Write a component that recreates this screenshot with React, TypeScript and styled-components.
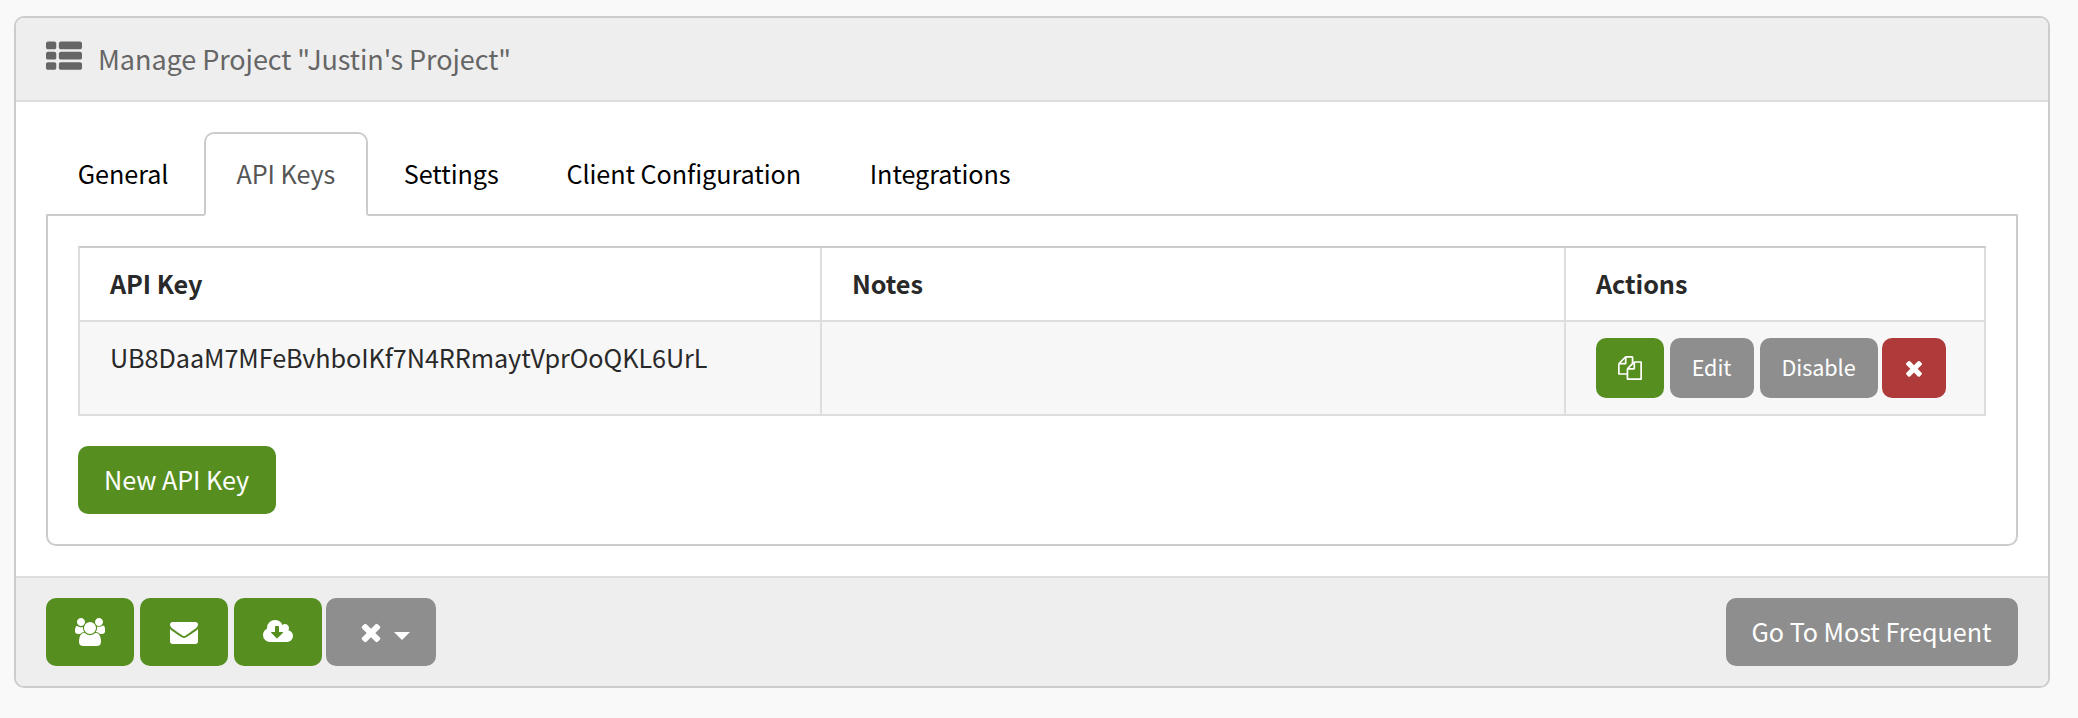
import React from "react";
import styled, { createGlobalStyle } from "styled-components";

const GlobalStyle = createGlobalStyle`
  *, *::before, *::after { box-sizing: border-box; }
  body {
    margin: 0;
    background: #f9f9f9;
    color: #292929;
    font-family: "Noto Sans CJK JP", "Open Sans", sans-serif;
    font-size: 25.2px;
    line-height: 40px;
    letter-spacing: -0.06px;
    -webkit-font-smoothing: antialiased;
  }
`;

const green = "#568f20";
const gray = "#8e8e8e";
const red = "#af3a3a";

const Page = styled.main`
  padding: 16px 28px 30px 14px;
`;

const Card = styled.section`
  display: flex;
  flex-direction: column;
  height: 672px;
  border: 2px solid #ccc;
  border-radius: 10px;
  background: #fff;
  overflow: hidden;
`;

const CardHeader = styled.header`
  display: flex;
  flex: none;
  align-items: flex-start;
  gap: 16px;
  height: 84px;
  padding: 21px 30px 0;
  border-bottom: 2px solid #ddd;
  background: #eee;
  color: #666;
`;

const Title = styled.h1`
  margin: 0;
  padding-top: 2px;
  font-size: 27px;
  font-weight: 400;
  line-height: 36px;
  letter-spacing: -0.07px;
`;

const CardBody = styled.div`
  flex: 1;
  padding: 30px 30px 0;
`;

const CardFooter = styled.footer`
  display: flex;
  flex: none;
  justify-content: space-between;
  align-items: flex-start;
  height: 110px;
  padding: 20px 30px 0;
  border-top: 2px solid #ddd;
  background: #eee;
`;

const Tabs = styled.nav`
  position: relative;
  z-index: 1;
  display: flex;
  gap: 4px;
  margin-bottom: -2px;
`;

const Tab = styled.a<{ $active?: boolean; $width: number; $indent?: number }>`
  width: ${(p) => p.$width}px;
  height: 84px;
  padding: 20px 0 0 ${(p) => p.$indent ?? 29.8}px;
  border: 2px solid ${(p) => (p.$active ? "#ccc" : "transparent")};
  border-bottom: ${(p) => (p.$active ? "2px solid #fff" : "0")};
  border-radius: 10px 10px 0 0;
  color: ${(p) => (p.$active ? "#555" : "#000")};
  background: ${(p) => (p.$active ? "#fff" : "transparent")};
  line-height: 39px;
  white-space: nowrap;
`;

const Pane = styled.div`
  height: 332px;
  padding: 30px;
  border: 2px solid #ccc;
  border-radius: 0 0 10px 10px;
`;

const Table = styled.table`
  width: 1908px;
  margin-bottom: 30px;
  table-layout: fixed;
  border-collapse: separate;
  border-spacing: 0;
  border-top: 2px solid #ccc;
  border-left: 2px solid #ddd;
`;

const Cell = styled.td`
  height: 94px;
  padding: 15px 30px 0;
  border-right: 2px solid #ddd;
  border-bottom: 2px solid #ddd;
  background: #f7f7f7;
  text-align: left;
  vertical-align: top;
  white-space: nowrap;
`;

const ActionCell = styled(Cell)`
  padding-top: 16px;
`;

const HeadCell = styled(Cell).attrs({ as: "th" })`
  height: 74px;
  background: #fff;
  font-weight: 700;
`;

const Group = styled.div<{ $gap?: number }>`
  display: flex;
  gap: ${(p) => p.$gap ?? 6}px;
`;

const Button = styled.button<{ $color: string; $width: number; $small?: boolean }>`
  display: flex;
  justify-content: center;
  align-items: center;
  width: ${(p) => p.$width}px;
  height: ${(p) => (p.$small ? 60 : 68)}px;
  padding: 0;
  border: 0;
  border-radius: 10px;
  background: ${(p) => p.$color};
  color: #fff;
  font: inherit;
  font-size: ${(p) => (p.$small ? 21.6 : 25.2)}px;
  letter-spacing: -0.06px;
  white-space: nowrap;
`;

const Label = styled.span`
  line-height: 40px;
  padding: 0 1px 2px 0;
`;

const Glyph = styled.svg<{ $w: number; $h: number }>`
  display: block;
  flex: none;
  width: ${(p) => p.$w}px;
  height: ${(p) => p.$h}px;
  fill: currentColor;
`;

const Caret = styled.i`
  margin: 8px 0 0 9px;
  border: 8px solid transparent;
  border-top-color: #fff;
  border-bottom: 0;
`;

const MenuContent = styled.span`
  display: flex;
  align-items: center;
  padding-left: 5px;
`;

const paths = {
  thList:
    "M512 1248v192q0 40-28 68t-68 28h-320q-40 0-68-28t-28-68v-192q0-40 28-68t68-28h320q40 0 68 28t28 68zm0-512v192q0 40-28 68t-68 28h-320q-40 0-68-28t-28-68v-192q0-40 28-68t68-28h320q40 0 68 28t28 68zm1280 512v192q0 40-28 68t-68 28h-960q-40 0-68-28t-28-68v-192q0-40 28-68t68-28h960q40 0 68 28t28 68zm-1280-1024v192q0 40-28 68t-68 28h-320q-40 0-68-28t-28-68v-192q0-40 28-68t68-28h320q40 0 68 28t28 68zm1280 512v192q0 40-28 68t-68 28h-960q-40 0-68-28t-28-68v-192q0-40 28-68t68-28h960q40 0 68 28t28 68zm0-512v192q0 40-28 68t-68 28h-960q-40 0-68-28t-28-68v-192q0-40 28-68t68-28h960q40 0 68 28t28 68z",
  times:
    "M1490 1322q0 40-28 68l-136 136q-28 28-68 28t-68-28l-294-294-294 294q-28 28-68 28t-68-28l-136-136q-28-28-28-68t28-68l294-294-294-294q-28-28-28-68t28-68l136-136q28-28 68-28t68 28l294 294 294-294q28-28 68-28t68 28l136 136q28 28 28 68t-28 68l-294 294 294 294q28 28 28 68z",
  envelope:
    "M1792 710v794q0 66-47 113t-113 47h-1472q-66 0-113-47t-47-113v-794q44 49 101 87 362 246 497 345 57 42 92.5 65.5t94.5 48 110 24.5h2q51 0 110-24.5t94.5-48 92.5-65.5q170-123 498-345 57-39 100-87zm0-294q0 79-49 151t-122 123q-376 261-468 325-10 7-42.5 31t-54 38.5-52 32.5-57.5 27-50 9h-2q-23 0-50-9t-57.5-27-52-32.5-54-38.5-42.5-31q-91-64-262-182.5t-205-142.5q-62-42-117-115.5t-55-136.5q0-78 41.5-130t118.5-52h1472q65 0 112.5 47t47.5 113z",
  copy:
    "M1696 384q40 0 68 28t28 68v1216q0 40-28 68t-68 28h-960q-40 0-68-28t-28-68v-288h-544q-40 0-68-28t-28-68v-672q0-40 20-88t48-76l408-408q28-28 76-48t88-20h416q40 0 68 28t28 68v328q68-40 128-40h416zm-544 213l-299 299h299v-299zm-640-384l-299 299h299v-299zm196 647l316-316v-416h-384v416q0 40-28 68t-68 28h-416v640h512v-256q0-40 20-88t48-76zm956 804v-1152h-384v416q0 40-28 68t-68 28h-416v640h896z",
  cloud:
    "M1280 928q0-14-9-23t-23-9h-224v-352q0-13-9.5-22.5t-22.5-9.5h-192q-13 0-22.5 9.5t-9.5 22.5v352h-224q-13 0-22.5 9.5t-9.5 22.5q0 14 9 23l352 352q9 9 23 9t23-9l351-351q10-12 10-24zm640 224q0 159-112.5 271.5t-271.5 112.5h-1088q-185 0-316.5-131.5t-131.5-316.5q0-130 70-240t188-165q-2-30-2-43 0-212 150-362t362-150q156 0 285.5 87t188.5 231q71-62 166-62 106 0 181 75t75 181q0 76-41 138 130 31 213.5 135.5t83.5 238.5z",
  users:
    "M593 896q-162 5-265 128h-134q-82 0-138-40.5t-56-118.5q0-353 124-353 6 0 43.5 21t97.5 42.5 119 21.5q67 0 133-23-5 37-5 66 0 159 90 294zm1071 637q0 120-73 189.5t-194 69.5h-874q-121 0-194-69.5t-73-189.5q0-53 3.5-103.5t14-109 26.5-108.5 43-97.5 62-81 85.5-53.5 111.5-20q10 0 43 21.5t73 48 107 48 135 21.5 135-21.5 107-48 73-48 43-21.5q61 0 111.5 20t85.5 53.5 62 81 43 97.5 26.5 108.5 14 109 3.5 103.5zm-1024-1277q0 106-75 181t-181 75-181-75-75-181 75-181 181-75 181 75 75 181zm704 384q0 159-112.5 271.5t-271.5 112.5-271.5-112.5-112.5-271.5 112.5-271.5 271.5-112.5 271.5 112.5 112.5 271.5zm576 225q0 78-56 118.5t-138 40.5h-134q-103-123-265-128 90-135 90-294 0-29-5-66 66 23 133 23 59 0 119-21.5t97.5-42.5 43.5-21q124 0 124 353zm-128-609q0 106-75 181t-181 75-181-75-75-181 75-181 181-75 181 75 75 181z",
};

function Icon({ name, size, units = 1792 }: { name: keyof typeof paths; size: number; units?: number }) {
  return (
    <Glyph $w={(size * units) / 1792} $h={size} viewBox={`0 0 ${units} 1792`} aria-hidden>
      <path d={paths[name]} />
    </Glyph>
  );
}

const tabs = [
  { name: "General", width: 154 },
  { name: "API Keys", width: 164, indent: 30.4, active: true },
  { name: "Settings", width: 158 },
  { name: "Client Configuration", width: 300, indent: 30.4 },
  { name: "Integrations", width: 204 },
];

export default function App() {
  return (
    <Page>
      <GlobalStyle />
      <Card>
        <CardHeader>
          <Icon name="thList" size={36} />
          <Title>Manage Project "Justin's Project"</Title>
        </CardHeader>
        <CardBody>
          <Tabs>
            {tabs.map((t) => (
              <Tab key={t.name} $width={t.width} $indent={t.indent} $active={t.active}>
                {t.name}
              </Tab>
            ))}
          </Tabs>
          <Pane>
            <Table>
              <colgroup>
                <col width={742} />
                <col width={744} />
                <col width={420} />
              </colgroup>
              <thead>
                <tr>
                  <HeadCell>API Key</HeadCell>
                  <HeadCell>Notes</HeadCell>
                  <HeadCell>Actions</HeadCell>
                </tr>
              </thead>
              <tbody>
                <tr>
                  <Cell>UB8DaaM7MFeBvhboIKf7N4RRmaytVprOoQKL6UrL</Cell>
                  <Cell />
                  <ActionCell>
                    <Group>
                      <Button $small $color={green} $width={68} aria-label="Copy">
                        <Icon name="copy" size={24} />
                      </Button>
                      <Button $small $color={gray} $width={84}>
                        <Label>Edit</Label>
                      </Button>
                      <Group $gap={4}>
                        <Button $small $color={gray} $width={118}>
                          <Label>Disable</Label>
                        </Button>
                        <Button $small $color={red} $width={64} aria-label="Delete">
                          <Icon name="times" size={24} />
                        </Button>
                      </Group>
                    </Group>
                  </ActionCell>
                </tr>
              </tbody>
            </Table>
            <Button $color={green} $width={198}>
              <Label>New API Key</Label>
            </Button>
          </Pane>
        </CardBody>
        <CardFooter>
          <Group>
            <Button $color={green} $width={88} aria-label="Users">
              <Icon name="users" size={28} units={1920} />
            </Button>
            <Button $color={green} $width={88} aria-label="Mail">
              <Icon name="envelope" size={28} />
            </Button>
            <Group $gap={4}>
              <Button $color={green} $width={88} aria-label="Download">
                <Icon name="cloud" size={28} units={1920} />
              </Button>
              <Button $color={gray} $width={110} aria-label="More">
                <MenuContent>
                  <Icon name="times" size={28} />
                  <Caret />
                </MenuContent>
              </Button>
            </Group>
          </Group>
          <Button $color={gray} $width={292}>
            <Label>Go To Most Frequent</Label>
          </Button>
        </CardFooter>
      </Card>
    </Page>
  );
}
